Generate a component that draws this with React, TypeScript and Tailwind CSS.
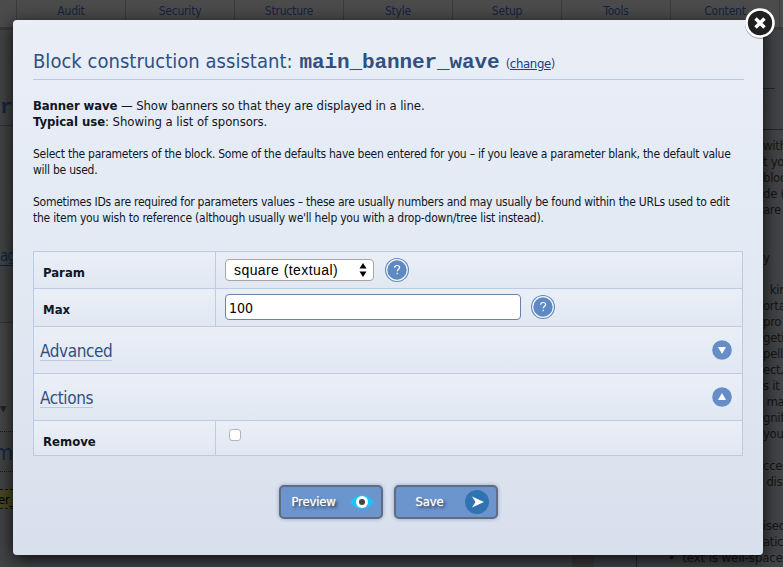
import type { ReactNode } from 'react';

const sans = "font-['DejaVu_Sans_Condensed','DejaVu_Sans',sans-serif] [font-stretch:condensed]";

const navItems = ['Audit', 'Security', 'Structure', 'Style', 'Setup', 'Tools', 'Content'];

const articleLines = [
  'with', 't you', 'block', 'de (', 'are', '', '', 'y', '', '  kin', 'ortar', 'pro', 'geti', 'pelli', 'ect,',
  's it e', ' mal', 'gnif', 'your', '', 'cces', ' disa', '', '',
];

function Backdrop() {
  return (
    <div className="absolute inset-0 flex flex-col bg-[#434447] text-[12px] text-[#151515]">
      <nav className="flex h-[30px] shrink-0 border-b-[3px] border-[#3a3836] bg-[#4b4b4b] pl-[16px] text-[#152440]">
        {navItems.map((n) => (
          <div key={n} className="h-[27px] w-[109px] shrink-0 border-l border-[#3b3b3b] pt-[2px] text-center text-[12px] leading-[18px] tracking-[-0.2px]">
            {n}
          </div>
        ))}
        <div className="h-[27px] border-l border-[#3b3b3b]" />
      </nav>
      <div className="flex flex-1 justify-between">
        <div className="flex w-[13px] flex-col whitespace-nowrap bg-[#434445] text-[#142643]">
          <div className="mt-[63px] h-[33px] border-b border-[#333] font-['Liberation_Mono',monospace] text-[21px] font-bold leading-[30px]">r</div>
          <div className="mt-[121px] h-[19px] w-[13px] border-b border-[#142643] text-[15px] leading-[18px] tracking-[-0.8px]">ag</div>
          <div className="mt-[56px] h-[109px] border-t border-[#333] bg-[#474747] pt-[78px] text-[14px] leading-[14px] text-[#222]">▾</div>
          <div className="h-[41px] border-y border-dotted border-[#171717] text-[22px] leading-[42px] -indent-[6px] tracking-[-1px]">me</div>
          <div className="mt-[17px] h-[20px] border-y border-dashed border-[#171717] bg-[#4a4925] text-[13px] leading-[19px] tracking-[-0.3px] text-black -indent-[2px]">er_</div>
        </div>
        <div className="w-[20px] whitespace-pre pt-[58px] text-[13px] leading-[16px] tracking-[-0.3px]">
          <div className="h-px w-[12px] bg-[#172947]" />
          <div className="mt-[40px] h-px bg-[#252525]" />
          <div className="pt-[8px]">
            {articleLines.map((t, i) => (
              <div key={i} className="h-[16px]">{t}</div>
            ))}
          </div>
          <div className="-mt-[4px]">isec</div>
          <div>atic</div>
        </div>
      </div>
      <div className="absolute bottom-0 left-[572px] flex h-[18px] w-[211px]">
        <div className="w-[22px] border-r border-[#353b49] bg-[#3b3b3d]" />
        <div className="w-[43px] border-r border-[#172445] bg-[#414347]" />
        <div className="flex-1 whitespace-nowrap pl-[31px] pt-[1px] text-[13px] leading-[16px] tracking-[-0.05px]">
          •&nbsp; text is well-space
        </div>
      </div>
    </div>
  );
}

function Help() {
  return (
    <svg className="h-[24px] w-[24px] shrink-0" viewBox="0 0 24 24">
      <circle cx="12" cy="12" r="12" fill="#5f89c2" />
      <circle cx="12" cy="12" r="10.3" fill="#5f89c2" stroke="#f3f7fc" strokeWidth="1.2" />
      <path d="M9.6 9.8c0-1.5 1-2.3 2.5-2.3s2.5.8 2.5 2c0 1.7-2.3 1.7-2.3 3.7M12.2 14.8v1.5" fill="none" stroke="#fff" strokeWidth="1.2" />
    </svg>
  );
}

function Toggle({ up }: { up?: boolean }) {
  return (
    <svg className="h-[20px] w-[20px]" viewBox="0 0 20 20">
      <circle cx="10" cy="10" r="9.8" fill="#678dc6" />
      <path d={up ? 'M10 6L14 13H6Z' : 'M10 14L14 7H6Z'} fill="#fff" />
    </svg>
  );
}

const cell = 'border-b border-[#bdcce3] bg-gradient-to-b from-[#eaeff7] to-[#e1e8f2]';

function Row({ label, height, labelPad, children }: { label: string; height: string; labelPad: string; children: ReactNode }) {
  return (
    <div className={`flex ${height} ${cell}`}>
      <div className={`flex w-[182px] items-center border-r border-[#bdcce3] pl-[9px] text-[13px] font-bold text-[#101624] ${labelPad}`}>
        {label}
      </div>
      {children}
    </div>
  );
}

function Section({ title, up }: { title: string; up?: boolean }) {
  return (
    <div className={`flex h-[47px] items-start justify-between pl-[6px] pr-[10px] pt-[13px] ${cell}`}>
      <span className="h-[21px] border-b border-[#b9c9e2] text-[17px] leading-[23px] tracking-[-0.4px] text-[#305082]">{title}</span>
      <Toggle up={up} />
    </div>
  );
}

function ActionButton({ label, children, pad }: { label: string; children: ReactNode; pad: string }) {
  return (
    <button className={`flex h-[34px] w-[104px] items-center justify-between rounded-[5px] border-2 border-[#5f6c84] bg-[#6c94cd] pr-[7px] text-[13px] tracking-[-0.2px] text-white shadow-[0_0_4px_#93a4c2] [text-shadow:2px_2px_3px_#26364f,0_0_1px_white] ${pad}`}>
      {label}
      {children}
    </button>
  );
}

export default function App() {
  return (
    <div className={`relative h-[567px] w-[783px] overflow-hidden ${sans}`}>
      <Backdrop />
      <main className="absolute left-[13px] top-[20px] flex h-[535px] w-[750px] flex-col rounded-[4px] bg-gradient-to-b from-[#e9eef7] via-[#e2e9f3] to-[#d9e0ed] px-[20px] text-[#101624] shadow-[0_4px_18px_rgba(0,0,0,0.85)]">
        <h1 className="flex h-[60px] w-[711px] items-baseline whitespace-nowrap border-b border-[#b9c8df] pt-[26px] text-[20px] leading-[30px] text-[#305082]">
          <span className="tracking-[0.03px]">Block construction assistant:</span>
          <span className="ml-[7px] font-['Liberation_Mono',monospace] text-[21px] font-bold tracking-[-0.1px]">main_banner_wave</span>
          <span className="ml-[6px] text-[13px] tracking-[-0.35px]">(<a className="text-[#17407e] underline">change</a>)</span>
        </h1>
        <div className="mt-[18px] whitespace-nowrap text-[13px] leading-[16px]">
          <p className="tracking-[-0.1px]"><b>Banner wave</b> — Show banners so that they are displayed in a line.</p>
          <p className="tracking-[-0.05px]"><b>Typical use</b>: Showing a list of sponsors.</p>
        </div>
        <div className="mt-[16px] whitespace-nowrap text-[12px] leading-[16px] tracking-[-0.25px]">
          <p className="tracking-[-0.255px]">Select the parameters of the block. Some of the defaults have been entered for you – if you leave a parameter blank, the default value</p>
          <p>will be used.</p>
          <p className="mt-[16px]">Sometimes IDs are required for parameters values – these are usually numbers and may usually be found within the URLs used to edit</p>
          <p className="tracking-[-0.23px]">the item you wish to reference (although usually we'll help you with a drop-down/tree list instead).</p>
        </div>
        <div className="mt-[25px] w-[710px] border-x border-t border-[#bdcce3]">
          <Row label="Param" height="h-[37px]" labelPad="pt-[6px]">
            <div className="flex items-center gap-[11px] pl-[9px]">
              <div className="flex h-[22px] w-[149px] items-center justify-between rounded-[4px] border border-[#a5a5a5] bg-white pl-[8px] pr-[6px] font-['Liberation_Sans',sans-serif] text-[14px] tracking-[0.42px] text-black">
                square (textual)
                <svg className="h-[14px] w-[8px] shrink-0" viewBox="0 0 8 14"><path d="M4 0L7.5 5.5h-7zM4 14L7.5 8.5h-7z" /></svg>
              </div>
              <Help />
            </div>
          </Row>
          <Row label="Max" height="h-[38px]" labelPad="pt-[4px]">
            <div className="flex items-center gap-[10px] pb-px pl-[9px]">
              <input defaultValue="100" className="h-[26px] w-[296px] rounded-[4px] border border-[#6883ad] bg-white px-[3px] pt-[2px] text-[14px] text-black" />
              <Help />
            </div>
          </Row>
          <Section title="Advanced" />
          <Section title="Actions" up />
          <Row label="Remove" height="h-[35px]" labelPad="pt-[8px]">
            <div className="ml-[13px] mt-[8px] h-[12px] w-[12px] rounded-[3px] border border-[#b5b5b5] bg-white" />
          </Row>
        </div>
        <div className="mt-[29px] flex justify-center gap-[11px]">
          <ActionButton label="Preview" pad="pl-[11px]">
            <svg className="h-[24px] w-[24px]" viewBox="0 0 24 24">
              <path d="M0 12C7 3 17 3 24 12C17 21 7 21 0 12Z" fill="#1bc3fb" />
              <circle cx="12" cy="12" r="6" fill="#fff" /><circle cx="12" cy="12" r="3" fill="#444" />
            </svg>
          </ActionButton>
          <ActionButton label="Save" pad="pl-[20px]">
            <svg className="h-[24px] w-[24px]" viewBox="0 0 24 24">
              <circle cx="12" cy="12" r="12" fill="#2f74b0" />
              <path d="M7 6.5L19 12L7 17.5L10.5 12Z" fill="#fff" />
            </svg>
          </ActionButton>
        </div>
      </main>
      <button aria-label="Close" className="absolute left-[744px] top-[7px]">
        <svg className="h-[32px] w-[32px]" viewBox="0 0 32 32">
          <circle cx="16" cy="17" r="15" fill="#000" opacity=".3" />
          <circle cx="16" cy="16" r="13.5" fill="#202020" stroke="#fff" strokeWidth="2.6" />
          <path d="M11.5 11.5l9 9M20.5 11.5l-9 9" stroke="#fff" strokeWidth="3.4" />
        </svg>
      </button>
    </div>
  );
}
